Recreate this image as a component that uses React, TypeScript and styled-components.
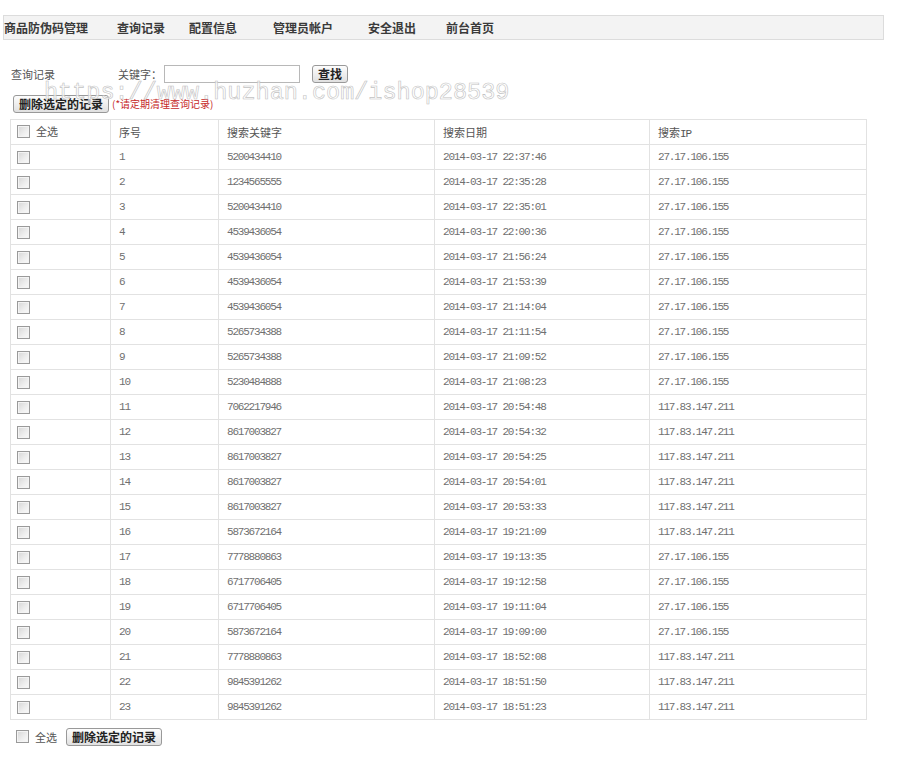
import React from "react";
import styled, { createGlobalStyle } from "styled-components";

const Global = createGlobalStyle`
  html, body { margin: 0; padding: 0; background: #fff; }
  body { font-family: "Noto Sans CJK SC", "Liberation Sans", sans-serif; font-size: 11px; color: #555; }
`;

const Page = styled.div`
  position: relative;
  width: 900px;
  min-height: 759px;
  padding-top: 15px;
  box-sizing: border-box;
`;

const Nav = styled.div`
  display: flex;
  align-items: center;
  margin-left: 3px;
  width: 881px;
  height: 25px;
  box-sizing: border-box;
  background: #f3f3f3;
  border: 1px solid #dcdcdc;
`;

const NavItem = styled.a<{ $w?: number }>`
  flex: 0 0 ${(p) => (p.$w ? `${p.$w}px` : "auto")};
  font-size: 12px;
  font-weight: bold;
  color: #3a3a3a;
  text-decoration: none;
  line-height: 22px;
  white-space: nowrap;
`;

const SearchRow = styled.div`
  display: flex;
  align-items: center;
  margin-top: 24px;
  padding-left: 11px;
  height: 19px;
`;

const Label = styled.span<{ $w?: number }>`
  flex: 0 0 ${(p) => (p.$w ? `${p.$w}px` : "auto")};
  font-size: 11px;
  color: #555;
  white-space: nowrap;
`;

const TextInput = styled.input`
  width: 136px;
  height: 18px;
  box-sizing: border-box;
  border: 1px solid #b8b8b8;
  margin: 0 12px 0 2px;
  padding: 0 2px;
`;

const Button = styled.button`
  height: 18px;
  box-sizing: border-box;
  padding: 0 5px;
  border: 1px solid #999;
  border-radius: 3px;
  background: linear-gradient(#fdfdfd, #e0e0e0);
  font-family: "Noto Sans CJK SC", sans-serif;
  font-size: 12px;
  font-weight: bold;
  color: #222;
  line-height: 15px;
  white-space: nowrap;
  cursor: pointer;
`;

const ActionRow = styled.div`
  display: flex;
  align-items: center;
  margin-top: 12px;
  padding-left: 13px;
  height: 17px;
`;

const Note = styled.span`
  margin-left: 3px;
  font-size: 10px;
  color: #c62828;
  white-space: nowrap;
`;

const Table = styled.table`
  margin: 7px 0 0 10px;
  width: 856px;
  border-collapse: collapse;
  table-layout: fixed;
`;

const Col = styled.col<{ $w: number }>`
  width: ${(p) => p.$w}px;
`;

const Row = styled.tr`
  height: 25px;
`;

const HeadCell = styled.td<{ $first?: boolean }>`
  box-sizing: border-box;
  border: 1px solid #e2e2e2;
  padding: 0 0 0 ${(p) => (p.$first ? 6 : 8)}px;
  font-size: 11px;
  color: #555;
  vertical-align: middle;
  white-space: nowrap;
  overflow: hidden;
`;

const Mono = styled.span`
  font-family: "Liberation Mono", monospace;
  letter-spacing: -1.2px;
`;

const Cell = styled.td<{ $mono?: boolean }>`
  box-sizing: border-box;
  border: 1px solid #e2e2e2;
  padding: 0 0 0 ${(p) => (p.$mono ? 8 : 6)}px;
  font-family: "Liberation Mono", "Noto Sans CJK SC", monospace;
  font-size: 11px;
  letter-spacing: -1.2px;
  color: #707070;
  vertical-align: middle;
  white-space: nowrap;
  overflow: hidden;
`;

const CheckWrap = styled.label`
  display: inline-flex;
  align-items: center;
  gap: 6px;
  font-size: 11px;
  color: #555;
  letter-spacing: 0;
  font-family: "Noto Sans CJK SC", sans-serif;
`;

const Check = styled.input.attrs({ type: "checkbox" })`
  appearance: none;
  -webkit-appearance: none;
  margin: 0;
  width: 13px;
  height: 13px;
  box-sizing: border-box;
  border: 1px solid #9a9a9a;
  background: linear-gradient(135deg, #d6d6d6 0%, #efefef 60%, #fafafa 100%);
  box-shadow: inset 0 0 0 1px #f4f4f4;
  vertical-align: middle;
`;

const Footer = styled.div`
  display: flex;
  align-items: center;
  gap: 9px;
  margin-top: 8px;
  padding-left: 16px;
  height: 17px;
`;

const Watermark = styled.div`
  position: absolute;
  left: 44px;
  top: 79px;
  font-family: "Liberation Mono", monospace;
  font-size: 23.5px;
  letter-spacing: 0;
  color: rgba(255, 255, 255, 0.7);
  -webkit-text-stroke: 0.6px #c2c2c2;
  pointer-events: none;
  white-space: nowrap;
`;

const rows: [string, string, string, string][] = [
  ["1", "5200434410", "2014-03-17 22:37:46", "27.17.106.155"],
  ["2", "1234565555", "2014-03-17 22:35:28", "27.17.106.155"],
  ["3", "5200434410", "2014-03-17 22:35:01", "27.17.106.155"],
  ["4", "4539436054", "2014-03-17 22:00:36", "27.17.106.155"],
  ["5", "4539436054", "2014-03-17 21:56:24", "27.17.106.155"],
  ["6", "4539436054", "2014-03-17 21:53:39", "27.17.106.155"],
  ["7", "4539436054", "2014-03-17 21:14:04", "27.17.106.155"],
  ["8", "5265734388", "2014-03-17 21:11:54", "27.17.106.155"],
  ["9", "5265734388", "2014-03-17 21:09:52", "27.17.106.155"],
  ["10", "5230484888", "2014-03-17 21:08:23", "27.17.106.155"],
  ["11", "7062217946", "2014-03-17 20:54:48", "117.83.147.211"],
  ["12", "8617003827", "2014-03-17 20:54:32", "117.83.147.211"],
  ["13", "8617003827", "2014-03-17 20:54:25", "117.83.147.211"],
  ["14", "8617003827", "2014-03-17 20:54:01", "117.83.147.211"],
  ["15", "8617003827", "2014-03-17 20:53:33", "117.83.147.211"],
  ["16", "5873672164", "2014-03-17 19:21:09", "117.83.147.211"],
  ["17", "7778880863", "2014-03-17 19:13:35", "27.17.106.155"],
  ["18", "6717706405", "2014-03-17 19:12:58", "27.17.106.155"],
  ["19", "6717706405", "2014-03-17 19:11:04", "27.17.106.155"],
  ["20", "5873672164", "2014-03-17 19:09:00", "27.17.106.155"],
  ["21", "7778880863", "2014-03-17 18:52:08", "117.83.147.211"],
  ["22", "9845391262", "2014-03-17 18:51:50", "117.83.147.211"],
  ["23", "9845391262", "2014-03-17 18:51:23", "117.83.147.211"],
];

export default function App() {
  return (
    <Page>
      <Global />
      <Nav>
        <NavItem $w={113}>商品防伪码管理</NavItem>
        <NavItem $w={72}>查询记录</NavItem>
        <NavItem $w={84}>配置信息</NavItem>
        <NavItem $w={95}>管理员帐户</NavItem>
        <NavItem $w={78}>安全退出</NavItem>
        <NavItem>前台首页</NavItem>
      </Nav>
      <SearchRow>
        <Label $w={107}>查询记录</Label>
        <Label>关键字：</Label>
        <TextInput type="text" />
        <Button>查找</Button>
      </SearchRow>
      <ActionRow>
        <Button>删除选定的记录</Button>
        <Note>(*请定期清理查询记录)</Note>
      </ActionRow>
      <Table>
        <colgroup>
          <Col $w={100} />
          <Col $w={108} />
          <Col $w={216} />
          <Col $w={215} />
          <Col $w={217} />
        </colgroup>
        <tbody>
          <Row>
            <HeadCell $first>
              <CheckWrap>
                <Check />
                全选
              </CheckWrap>
            </HeadCell>
            <HeadCell>序号</HeadCell>
            <HeadCell>搜索关键字</HeadCell>
            <HeadCell>搜索日期</HeadCell>
            <HeadCell>
              搜索<Mono>IP</Mono>
            </HeadCell>
          </Row>
          {rows.map((r) => (
            <Row key={r[0]}>
              <Cell>
                <Check />
              </Cell>
              <Cell $mono>{r[0]}</Cell>
              <Cell $mono>{r[1]}</Cell>
              <Cell $mono>{r[2]}</Cell>
              <Cell $mono>{r[3]}</Cell>
            </Row>
          ))}
        </tbody>
      </Table>
      <Footer>
        <CheckWrap>
          <Check />
          全选
        </CheckWrap>
        <Button>删除选定的记录</Button>
      </Footer>
      <Watermark>https://www.huzhan.com/ishop28539</Watermark>
    </Page>
  );
}
